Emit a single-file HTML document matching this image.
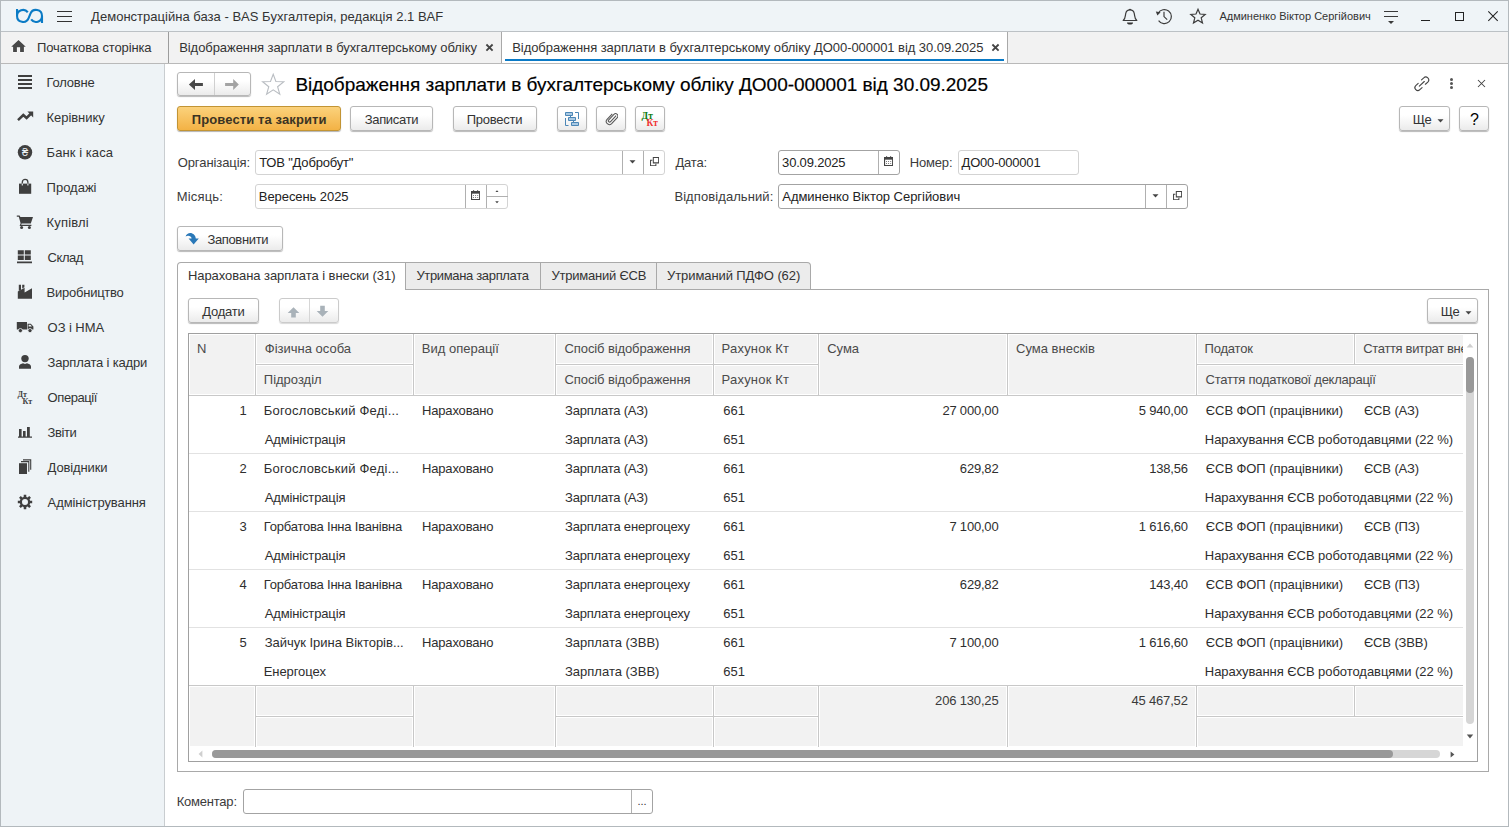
<!DOCTYPE html>
<html lang="uk"><head><meta charset="utf-8"><title>BAS Бухгалтерія</title>
<style>
*{box-sizing:border-box;margin:0;padding:0}
html,body{width:1509px;height:827px;overflow:hidden;background:#fff}
body{font-family:"Liberation Sans",sans-serif;font-size:13px;color:#333;position:relative}
.abs{position:absolute}
#frame{position:absolute;left:0;top:0;width:1509px;height:827px;border:1px solid #b3b9bd;pointer-events:none;z-index:50}
#topbar{position:absolute;left:1px;top:1px;width:1507px;height:30px;background:#eff4f7}
#topline{position:absolute;left:1px;top:31px;width:1507px;height:1px;background:#bcc1c5}
#tabbar{position:absolute;left:1px;top:32px;width:1507px;height:31px;background:#f2f2f2}
#tabline{position:absolute;left:1px;top:63px;width:1507px;height:1px;background:#b9b9b9}
#side{position:absolute;left:1px;top:64px;width:163px;height:762px;background:#eef3f6}
#sideline{position:absolute;left:164px;top:64px;width:1px;height:762px;background:#c9cdd0}
.t{position:absolute;white-space:nowrap;line-height:16px;color:#333}
.btn{position:absolute;height:25px;border:1px solid #b7b7b7;border-radius:3px;background:linear-gradient(#ffffff 35%,#ebebeb);box-shadow:0 1px 1px rgba(0,0,0,.28)}
.btn.y{border-color:#c29434;background:linear-gradient(#fbd27c,#f3b245);box-shadow:0 1px 1px rgba(0,0,0,.3)}
.fld{position:absolute;height:25px;border:1px solid #d3d3d3;border-radius:3px;background:#fff}
.fld.d{border-color:#a3a3a3}
.vs{position:absolute;top:0;width:1px;height:23px;background:#b0b0b0}
.tab{position:absolute;top:262px;height:28px;border:1px solid #a9a9a9;border-left:none;background:#ececec}
.hc{position:absolute;background:#f2f2f2;border:1px solid #fff}
</style></head><body>
<div id="topbar"></div><div id="topline"></div>
<div id="tabbar"></div><div id="tabline"></div>
<div id="side"></div><div id="sideline"></div>
<!-- TOP BAR -->
<svg class="abs" style="left:14px;top:6px" width="32" height="20" viewBox="0 0 32 20"><path d="M3.05 2.90 L3.05 9.95 A6 6 0 0 0 14.61 12.21 L16.44 7.69 A6 6 0 0 1 28.00 9.95 L28.00 17.00 M3.05 9.95 A6 6 0 0 1 13.78 6.26 M28.00 9.95 A6 6 0 0 1 17.15 13.48" fill="none" stroke="#0b7bc5" stroke-width="2.1"/></svg>
<div class="abs" style="left:57px;top:11px;width:15px;height:1px;background:#333"></div><div class="abs" style="left:57px;top:16px;width:15px;height:1px;background:#333"></div><div class="abs" style="left:57px;top:21px;width:15px;height:1px;background:#333"></div>
<div class="t" style="top:9px;left:91.10px;letter-spacing:0.02px;">Демонстраційна база - BAS Бухгалтерія, редакція 2.1 BAF</div>
<svg class="abs" style="left:1121px;top:7px" width="18" height="19" viewBox="0 0 18 19"><path d="M2.2 13.5 C4.6 11.5 4.2 8.8 4.7 6.6 C5.2 4.2 6.9 2.9 9 2.9 C11.1 2.9 12.8 4.2 13.3 6.6 C13.8 8.8 13.4 11.5 15.8 13.5 Z" fill="none" stroke="#3c3c3c" stroke-width="1.2" stroke-linejoin="round"/><path d="M8.2 2.9 a0.9 0.9 0 0 1 1.6 0" fill="none" stroke="#3c3c3c" stroke-width="1.1"/><path d="M6 15.4 H12 A3 2.1 0 0 1 6 15.4 Z" fill="#333"/></svg>
<svg class="abs" style="left:1155px;top:7px" width="19" height="19" viewBox="0 0 19 19"><path d="M3.2 6.3 A7 7 0 1 1 3.6 13.6" fill="none" stroke="#3c3c3c" stroke-width="1.2"/><path d="M0.8 4.4 L5.6 5.2 L2.4 8.6 Z" fill="#3c3c3c"/><path d="M9 4.8 V9.6 L12.2 12.6" fill="none" stroke="#3c3c3c" stroke-width="1.2"/></svg>
<svg class="abs" style="left:1189px;top:7px" width="18" height="18" viewBox="0 0 18 18"><path d="M9 2.2 L11 7 L16.2 7.4 L12.2 10.8 L13.5 16 L9 13.2 L4.5 16 L5.8 10.8 L1.8 7.4 L7 7 Z" fill="none" stroke="#3c3c3c" stroke-width="1.2" stroke-linejoin="miter"/></svg>
<div class="t" style="top:9px;left:1219.40px;font-size:11px;line-height:14px;">Админенко Віктор Сергійович</div>
<svg class="abs" style="left:1383px;top:9px" width="16" height="16" viewBox="0 0 16 16"><path d="M1 2.5H15M1 7.5H15" stroke="#3a3a3a" stroke-width="1" fill="none"/><path d="M5 12 H11 L8 15 Z" fill="#3a3a3a"/></svg>
<div class="abs" style="left:1421px;top:20px;width:9px;height:1px;background:#222"></div>
<div class="abs" style="left:1455px;top:12px;width:9px;height:9px;border:1px solid #222"></div>
<svg class="abs" style="left:1487px;top:10px" width="12" height="12" viewBox="0 0 12 12"><path d="M1.3 1.4 L10.7 10.8 M10.7 1.4 L1.3 10.8" stroke="#222" stroke-width="1.05" fill="none"/></svg>
<!-- TAB BAR -->
<svg class="abs" style="left:11px;top:40px;overflow:visible" width="15" height="13" viewBox="0 0 15 13"><path d="M7.5 0 L0.2 6.7 H2.1 V11.9 H5.9 V7.2 H9.1 V11.9 H12.9 V6.7 H14.8 Z" fill="#484848" stroke="#fbfbfb" stroke-width="1.2" paint-order="stroke"/></svg>
<div class="t" style="top:40px;left:37.10px;letter-spacing:-0.131px;">Початкова сторінка</div>
<div class="abs" style="left:168px;top:32px;width:1px;height:31px;background:#9c9c9c"></div>
<div class="t" style="top:40px;left:179.20px;letter-spacing:-0.066px;">Відображення зарплати в бухгалтерському обліку</div>
<svg class="abs" style="left:485px;top:43px" width="9" height="9" viewBox="0 0 9 9"><path d="M1.4 1.5 L7.6 7.7 M7.6 1.5 L1.4 7.7" stroke="#444" stroke-width="1.8" fill="none"/></svg>
<div class="abs" style="left:501px;top:32px;width:1px;height:31px;background:#a9a9a9"></div>
<div class="abs" style="left:502px;top:32px;width:505px;height:31px;background:#fff"></div>
<div class="abs" style="left:1007px;top:32px;width:1px;height:31px;background:#a9a9a9"></div>
<div class="abs" style="left:505px;top:59px;width:499px;height:2px;background:#0a7ac6"></div>
<div class="t" style="top:40px;left:512.20px;letter-spacing:-0.053px;">Відображення зарплати в бухгалтерському обліку ДО00-000001 від 30.09.2025</div>
<svg class="abs" style="left:991px;top:43px" width="9" height="9" viewBox="0 0 9 9"><path d="M1.4 1.5 L7.6 7.7 M7.6 1.5 L1.4 7.7" stroke="#444" stroke-width="1.8" fill="none"/></svg>
<!-- SIDEBAR -->
<div class="t" style="top:75px;left:46.60px;letter-spacing:-0.21px;">Головне</div>
<div class="t" style="top:110px;left:46.60px;letter-spacing:-0.063px;">Керівнику</div>
<div class="t" style="top:145px;left:46.60px;letter-spacing:0.066px;">Банк і каса</div>
<div class="t" style="top:180px;left:46.60px;letter-spacing:-0.005px;">Продажі</div>
<div class="t" style="top:215px;left:46.60px;letter-spacing:0.151px;">Купівлі</div>
<div class="t" style="top:250px;left:47.60px;letter-spacing:-0.45px;">Склад</div>
<div class="t" style="top:285px;left:46.60px;letter-spacing:-0.244px;">Виробництво</div>
<div class="t" style="top:320px;left:47.60px;letter-spacing:-0.07px;">ОЗ і НМА</div>
<div class="t" style="top:355px;left:47.60px;letter-spacing:-0.177px;">Зарплата і кадри</div>
<div class="t" style="top:390px;left:47.60px;letter-spacing:-0.425px;">Операції</div>
<div class="t" style="top:425px;left:47.60px;letter-spacing:-0.425px;">Звіти</div>
<div class="t" style="top:460px;left:47.60px;letter-spacing:-0.124px;">Довідники</div>
<div class="t" style="top:495px;left:47.60px;letter-spacing:-0.095px;">Адміністрування</div>
<svg class="abs" style="left:15px;top:72px" width="20" height="20" viewBox="0 0 20 20"><path d="M3 3h14v2H3zM3 7h14v2H3zM3 11h14v2H3zM3 15h14v2H3z" fill="#3f3f3f"/></svg>
<svg class="abs" style="left:15px;top:107px" width="20" height="20" viewBox="0 0 20 20"><path d="M3 13.2 L8.3 8 L11.6 11 L15.6 7" fill="none" stroke="#3f3f3f" stroke-width="2.5" stroke-linejoin="miter"/><path d="M12.4 4.6 H18.2 V10.4 Z" fill="#3f3f3f"/></svg>
<svg class="abs" style="left:15px;top:142px" width="20" height="20" viewBox="0 0 20 20"><circle cx="10" cy="10.3" r="7.2" fill="#3f3f3f"/><text x="10" y="14.2" font-size="11" text-anchor="middle" fill="#eef3f6" font-family="Liberation Sans, sans-serif">₴</text></svg>
<svg class="abs" style="left:15px;top:177px" width="20" height="20" viewBox="0 0 20 20"><path d="M4 6.6 H16.2 V16.8 H4 Z" fill="#3f3f3f"/><path d="M7.3 8.5 V5.2 A2.8 2.8 0 0 1 12.9 5.2 V8.5" fill="none" stroke="#3f3f3f" stroke-width="1.3"/><path d="M7.3 6.6 V8.6 M12.9 6.6 V8.6" stroke="#eef3f6" stroke-width="1.1"/></svg>
<svg class="abs" style="left:15px;top:212px" width="20" height="20" viewBox="0 0 20 20"><path d="M1.8 3.6 H4.6 L5.4 5 H18 L15.8 11.6 H6.6 L6.2 12.8 H16.4 V14 H4.6 L5.6 11.2 L3.8 4.8 H1.8 Z" fill="#3f3f3f"/><circle cx="6.6" cy="15.6" r="1.5" fill="#3f3f3f"/><circle cx="14.4" cy="15.6" r="1.5" fill="#3f3f3f"/></svg>
<svg class="abs" style="left:15px;top:247px" width="20" height="20" viewBox="0 0 20 20"><path d="M2.8 3.3h6v4.3h-6zM9.8 3.3h6v4.3h-6zM2.8 8.6h6v4.4h-6zM9.8 8.6h6v4.4h-6zM2 14.6h15v1.6H2z" fill="#3f3f3f"/></svg>
<svg class="abs" style="left:15px;top:282px" width="20" height="20" viewBox="0 0 20 20"><path d="M2.8 16.7 V9.6 L9.6 5.8 V10.6 L17 6.3 V16.7 Z" fill="#3f3f3f"/><path d="M3.8 2.7h2.2v5.2l-2.2 1.2zM7.2 2.7h2.2v2.6l-2.2 1.2z" fill="#3f3f3f"/></svg>
<svg class="abs" style="left:15px;top:317px" width="20" height="20" viewBox="0 0 20 20"><path d="M1.8 4.9 H12 V12.6 H1.8 Z M12.6 6.8 H15.8 L18.4 9.6 V12.6 H12.6 Z" fill="#3f3f3f"/><path d="M13.6 7.8 H15.4 L16.9 9.6 H13.6 Z" fill="#eef3f6"/><circle cx="5.4" cy="13.6" r="2.1" fill="#3f3f3f" stroke="#eef3f6" stroke-width="0.8"/><circle cx="15" cy="13.6" r="2.1" fill="#3f3f3f" stroke="#eef3f6" stroke-width="0.8"/></svg>
<svg class="abs" style="left:15px;top:352px" width="20" height="20" viewBox="0 0 20 20"><circle cx="10" cy="6.6" r="3.7" fill="#3f3f3f"/><path d="M4 16.8 V14.6 C4 12.4 6.4 11.6 8 11.2 L10 12 L12 11.2 C13.6 11.6 16 12.4 16 14.6 V16.8 Z" fill="#3f3f3f"/></svg>
<svg class="abs" style="left:15px;top:387px" width="20" height="20" viewBox="0 0 20 20"><text x="2.4" y="9.6" font-size="8" font-weight="bold" fill="#3f3f3f" font-family="Liberation Serif, serif">Дт</text><text x="7.6" y="16.8" font-size="8" font-weight="bold" fill="#3f3f3f" font-family="Liberation Serif, serif">Кт</text></svg>
<svg class="abs" style="left:15px;top:422px" width="20" height="20" viewBox="0 0 20 20"><path d="M4 7h2.6v7.6H4zM8 9h2.6v5.6H8zM12 5h2.8v9.6H12zM3 14.6h14v1.2H3z" fill="#3f3f3f"/></svg>
<svg class="abs" style="left:15px;top:457px" width="20" height="20" viewBox="0 0 20 20"><path d="M4 6.2h8v10.8H4z" fill="#3f3f3f"/><path d="M6 4.6 H13.8 V14.8 M8 2.9 H15.7 V12.8" fill="none" stroke="#3f3f3f" stroke-width="1.1"/></svg>
<svg class="abs" style="left:15px;top:492px" width="20" height="20" viewBox="0 0 20 20"><path d="M15.12 8.64 L17.19 8.76 L17.19 11.24 L15.12 11.36 L14.59 12.66 L15.96 14.21 L14.21 15.96 L12.66 14.59 L11.36 15.12 L11.24 17.19 L8.76 17.19 L8.64 15.12 L7.34 14.59 L5.79 15.96 L4.04 14.21 L5.41 12.66 L4.88 11.36 L2.81 11.24 L2.81 8.76 L4.88 8.64 L5.41 7.34 L4.04 5.79 L5.79 4.04 L7.34 5.41 L8.64 4.88 L8.76 2.81 L11.24 2.81 L11.36 4.88 L12.66 5.41 L14.21 4.04 L15.96 5.79 L14.59 7.34 Z M13 10 A3 3 0 1 0 7 10 A3 3 0 1 0 13 10 Z" fill="#3f3f3f" fill-rule="evenodd"/></svg>
<!-- MAIN -->
<div class="abs" style="left:165px;top:64px;width:1343px;height:762px;background:#fff"></div>
<div class="btn " style="left:177px;top:72px;width:74px;height:24px;"></div>
<div class="abs" style="left:214px;top:73px;width:1px;height:22px;background:#d0d0d0"></div>
<svg class="abs" style="left:188px;top:78px" width="16" height="12" viewBox="0 0 16 12"><path d="M0.9 6.5 L7 1.1 V4.9 H14.9 V8 H7 V11.9 Z" fill="#484848"/></svg>
<svg class="abs" style="left:224px;top:78px" width="16" height="12" viewBox="0 0 16 12"><path d="M14.8 6.5 L9.2 1.1 V4.9 H1.1 V8 H9.2 V11.9 Z" fill="#a3a3a3"/></svg>
<svg class="abs" style="left:261px;top:72px" width="24" height="24" viewBox="0 0 24 24"><path d="M12.2 2.3 L14.9 9.5 L22.8 9.8 L16.6 14.7 L18.8 22.3 L12.2 17.9 L5.6 22.3 L7.8 14.7 L1.6 9.8 L9.5 9.5 Z" fill="#fff" stroke="#b9bdc2" stroke-width="1.1" stroke-linejoin="miter"/></svg>
<div class="t" style="top:73px;left:295.40px;font-size:19px;line-height:24px;color:#000;letter-spacing:-0.024px;-webkit-text-stroke:0.18px #000;">Відображення зарплати в бухгалтерському обліку ДО00-000001 від 30.09.2025</div>
<svg class="abs" style="left:1412.8px;top:74.8px" width="17.6" height="17.6" viewBox="0 0 19 19"><g fill="none" stroke="#444" stroke-width="1.2" stroke-linecap="round"><path d="M9.2 5.2 L11.6 3.2 A3.1 3.1 0 0 1 16 7.6 L13.4 10"/><path d="M9.8 13.6 L7.4 15.8 A3.1 3.1 0 0 1 3 11.4 L5.6 9"/><path d="M6.8 12 L12.2 7"/></g></svg>
<svg class="abs" style="left:1449px;top:77px" width="5" height="13" viewBox="0 0 5 13"><circle cx="2.5" cy="2.4" r="1.5" fill="#555"/><circle cx="2.5" cy="6.5" r="1.5" fill="#555"/><circle cx="2.5" cy="10.6" r="1.5" fill="#555"/></svg>
<svg class="abs" style="left:1477px;top:79px" width="9" height="9" viewBox="0 0 9 9"><path d="M1 1 L8 8 M8 1 L1 8" stroke="#444" stroke-width="1.05" fill="none"/></svg>
<div class="btn y" style="left:177px;top:106px;width:164px;height:25px;"></div>
<div class="t" style="top:112px;left:191.80px;font-weight:bold;color:#3b3323;letter-spacing:0.109px;">Провести та закрити</div>
<div class="btn " style="left:350px;top:106px;width:83px;height:25px;"></div>
<div class="t" style="top:112px;left:364.70px;letter-spacing:-0.312px;">Записати</div>
<div class="btn " style="left:453px;top:106px;width:84px;height:25px;"></div>
<div class="t" style="top:112px;left:466.70px;letter-spacing:-0.235px;">Провести</div>
<div class="btn " style="left:557px;top:106px;width:30px;height:25px;"></div>
<div class="btn " style="left:596px;top:106px;width:30px;height:25px;"></div>
<div class="btn " style="left:635px;top:106px;width:30px;height:25px;"></div>
<svg class="abs" style="left:563px;top:110px" width="18" height="18" viewBox="0 0 18 18"><g fill="#a9c9e3" stroke="#4b86b6" stroke-width="1"><path d="M2.5 2.5h7v3h-7zM5.5 7.5h7v3h-7zM8.5 12.5h7v3h-7z"/></g><path d="M12 2.5H15.5V9M2.5 8V15.5H5.5M7.5 5.5V7.5M10.5 10.5V12.5" fill="none" stroke="#4b86b6" stroke-width="1"/></svg>
<svg class="abs" style="left:604.5px;top:111.5px" width="13.5" height="14.3" viewBox="0 0 16 17"><path d="M13.2 4.4 L6.4 11.6 A1.5 1.5 0 0 1 4.2 9.6 L10.6 2.9 A2.7 2.7 0 0 1 14.6 6.6 L7.6 14 A3.7 3.7 0 0 1 2.2 9 L8.6 2.2" fill="none" stroke="#555" stroke-width="1.25"/></svg>
<svg class="abs" style="left:640px;top:109px" width="20" height="19" viewBox="0 0 20 19"><text x="1.6" y="9.8" font-size="9.5" font-weight="bold" fill="#0b7a10" font-family="Liberation Serif, serif">Дт</text><text x="6.6" y="17" font-size="9.5" font-weight="bold" fill="#f03434" font-family="Liberation Serif, serif">Кт</text></svg>
<div class="btn " style="left:1399px;top:106px;width:51px;height:25px;"></div>
<div class="t" style="top:112px;left:1412.80px;letter-spacing:-0.45px;">Ще</div>
<svg class="abs" style="left:1437px;top:119px" width="7" height="4" viewBox="0 0 7 4"><path d="M0.5 0.3H6.5L3.5 3.6Z" fill="#444"/></svg>
<div class="btn " style="left:1459px;top:106px;width:30px;height:25px;"></div>
<div class="t" style="top:110px;left:1470.00px;font-size:16px;line-height:20px;color:#000;">?</div>
<div class="t" style="top:155px;left:177.70px;color:#3b3b3b;letter-spacing:-0.078px;">Організація:</div>
<div class="fld " style="left:255px;top:150px;width:410px"><div class="vs" style="left:366px"></div><div class="vs" style="left:387px"></div></div>
<div class="t" style="top:155px;left:259.20px;color:#222;letter-spacing:-0.19px;">ТОВ "Добробут"</div>
<svg class="abs" style="left:629px;top:160px" width="7" height="4" viewBox="0 0 7 4"><path d="M0.5 0.3H6.5L3.5 3.6Z" fill="#444"/></svg>
<svg class="abs" style="left:650px;top:157px" width="9.2" height="9.2" viewBox="0 0 10 10"><path d="M3.6 0.6H9.4V6.4H3.6Z" fill="none" stroke="#444" stroke-width="1.1"/><path d="M2.6 3.6H0.6V9.4H6.4V7.4" fill="none" stroke="#444" stroke-width="1.1"/></svg>
<div class="t" style="top:155px;left:675.40px;color:#3b3b3b;letter-spacing:-0.172px;">Дата:</div>
<div class="fld d" style="left:778px;top:150px;width:122px"><div class="vs" style="left:99px"></div></div>
<div class="t" style="top:155px;left:782.10px;color:#222;letter-spacing:-0.181px;">30.09.2025</div>
<svg class="abs" style="left:884px;top:156px" width="9.2" height="10.1" viewBox="0 0 10 11"><path d="M0.6 1.6H9.4V10.4H0.6Z" fill="#fff" stroke="#444" stroke-width="1.2"/><path d="M0.6 1.4H9.4V4H0.6Z" fill="#444"/><path d="M2.8 0.2V2M7.2 0.2V2" stroke="#444" stroke-width="1.2"/><path d="M2.2 5.6h1v1h-1zM4.5 5.6h1v1h-1zM6.8 5.6h1v1h-1zM2.2 7.8h1v1h-1zM4.5 7.8h1v1h-1zM6.8 7.8h1v1h-1z" fill="#444"/></svg>
<div class="t" style="top:155px;left:909.80px;color:#3b3b3b;letter-spacing:-0.183px;">Номер:</div>
<div class="fld " style="left:958px;top:150px;width:121px"></div>
<div class="t" style="top:155px;left:961.60px;color:#222;letter-spacing:-0.205px;">ДО00-000001</div>
<div class="t" style="top:189px;left:176.70px;color:#3b3b3b;letter-spacing:0.187px;">Місяць:</div>
<div class="fld " style="left:255px;top:184px;width:253px"><div class="vs" style="left:209px"></div><div class="vs" style="left:230px"></div><div class="abs" style="left:231px;top:11px;width:21px;height:1px;background:#b0b0b0"></div></div>
<div class="t" style="top:189px;left:258.80px;color:#222;letter-spacing:-0.07px;">Вересень 2025</div>
<svg class="abs" style="left:471px;top:190px" width="9.2" height="10.1" viewBox="0 0 10 11"><path d="M0.6 1.6H9.4V10.4H0.6Z" fill="#fff" stroke="#444" stroke-width="1.2"/><path d="M0.6 1.4H9.4V4H0.6Z" fill="#444"/><path d="M2.8 0.2V2M7.2 0.2V2" stroke="#444" stroke-width="1.2"/><path d="M2.2 5.6h1v1h-1zM4.5 5.6h1v1h-1zM6.8 5.6h1v1h-1zM2.2 7.8h1v1h-1zM4.5 7.8h1v1h-1zM6.8 7.8h1v1h-1z" fill="#444"/></svg>
<svg class="abs" style="left:494.6px;top:189.5px" width="4" height="2.6" viewBox="0 0 5 3"><path d="M0.2 2.8H4.8L2.5 0.2Z" fill="#444"/></svg>
<svg class="abs" style="left:494.6px;top:201px" width="4" height="2.6" viewBox="0 0 5 3"><path d="M0.2 0.2H4.8L2.5 2.8Z" fill="#444"/></svg>
<div class="t" style="top:189px;left:674.40px;color:#3b3b3b;letter-spacing:0.087px;">Відповідальний:</div>
<div class="fld d" style="left:778px;top:184px;width:410px"><div class="vs" style="left:366px"></div><div class="vs" style="left:387px"></div></div>
<div class="t" style="top:189px;left:782.30px;color:#222;letter-spacing:-0.04px;">Админенко Віктор Сергійович</div>
<svg class="abs" style="left:1152px;top:194px" width="7" height="4" viewBox="0 0 7 4"><path d="M0.5 0.3H6.5L3.5 3.6Z" fill="#444"/></svg>
<svg class="abs" style="left:1173px;top:191px" width="9.2" height="9.2" viewBox="0 0 10 10"><path d="M3.6 0.6H9.4V6.4H3.6Z" fill="none" stroke="#444" stroke-width="1.1"/><path d="M2.6 3.6H0.6V9.4H6.4V7.4" fill="none" stroke="#444" stroke-width="1.1"/></svg>
<div class="btn " style="left:177px;top:226px;width:106px;height:25px;"></div>
<div class="t" style="top:232px;left:207.40px;letter-spacing:-0.344px;">Заповнити</div>
<svg class="abs" style="left:184px;top:231px" width="16" height="15" viewBox="0 0 16 15"><path d="M1.6 5.4 C2.4 2.8 5.4 1.4 8.2 2.4 C10.4 3.2 11.6 5 11.8 7.4 H14.8 L9.6 13.4 L4.6 7.4 H7.6 C7.4 5.4 4.6 4 1.6 5.4 Z" fill="#2a78b8"/></svg>
<div class="t" style="top:794px;left:176.70px;color:#3b3b3b;letter-spacing:-0.215px;">Коментар:</div>
<div class="fld d" style="left:243px;top:789px;width:410px"><div class="vs" style="left:387px"></div></div>
<div class="t" style="top:794px;left:637.40px;font-size:11px;line-height:14px;">...</div>
<!-- PANEL -->
<div class="abs" style="left:177px;top:289px;width:1312px;height:483px;border:1px solid #a9a9a9"></div>
<div class="abs" style="left:177px;top:262px;width:229px;height:28px;border:1px solid #a9a9a9;border-bottom:none;border-radius:4px 0 0 0;background:#fff"></div><div class="abs" style="left:178px;top:289px;width:227px;height:2px;background:#fff"></div>
<div class="tab" style="left:406px;width:135px"></div><div class="tab" style="left:541px;width:116px"></div><div class="tab" style="left:657px;width:154px;border-radius:0 4px 0 0"></div>
<div class="t" style="top:268px;left:187.90px;letter-spacing:-0.052px;">Нарахована зарплата і внески (31)</div>
<div class="t" style="top:268px;left:416.40px;letter-spacing:-0.337px;">Утримана зарплата</div>
<div class="t" style="top:268px;left:551.40px;letter-spacing:-0.218px;">Утриманий ЄСВ</div>
<div class="t" style="top:268px;left:667.10px;letter-spacing:-0.091px;">Утриманий ПДФО (62)</div>
<div class="btn " style="left:188px;top:298px;width:71px;height:25px;"></div>
<div class="t" style="top:304px;left:202.30px;letter-spacing:-0.256px;">Додати</div>
<div class="btn " style="left:279px;top:298px;width:60px;height:25px;border-color:#cbcbcb;box-shadow:0 1px 1px rgba(0,0,0,.15)"></div>
<div class="abs" style="left:309px;top:299px;width:1px;height:23px;background:#d6d6d6"></div>
<svg class="abs" style="left:287px;top:305.5px" width="13" height="13" viewBox="0 0 13 13"><path d="M6.5 1.2 L12.3 7 H8.8 V11.4 H4.2 V7 H0.7 Z" fill="#a9b2b9"/></svg>
<svg class="abs" style="left:316px;top:304.5px" width="13" height="13" viewBox="0 0 13 13"><path d="M6.5 11.7 L12.3 5.9 H8.8 V0.8 H4.2 V5.9 H0.7 Z" fill="#a9b2b9"/></svg>
<div class="btn " style="left:1427px;top:298px;width:51px;height:25px;"></div>
<div class="t" style="top:304px;left:1440.80px;letter-spacing:-0.45px;">Ще</div>
<svg class="abs" style="left:1465px;top:311px" width="7" height="4" viewBox="0 0 7 4"><path d="M0.5 0.3H6.5L3.5 3.6Z" fill="#444"/></svg>
<div class="abs" style="left:188px;top:333px;width:1290px;height:429px;border:1px solid #a0a0a0;background:#fff;overflow:hidden">
<div class="abs" style="left:0;top:0;width:1274px;height:413px;overflow:hidden">
<div class="abs" style="left:0;top:0;width:1400px;height:62px;background:#c8c8c8"></div>
<div class="hc" style="left:0px;top:0px;width:66px;height:61px"></div>
<div class="t" style="top:7px;left:7.90px;color:#4a4a4a;">N</div>
<div class="hc" style="left:67px;top:0px;width:157px;height:30px"></div>
<div class="hc" style="left:67px;top:31px;width:157px;height:30px"></div>
<div class="t" style="top:7px;left:75.80px;color:#4a4a4a;">Фізична особа</div>
<div class="t" style="top:38px;left:74.80px;color:#4a4a4a;">Підрозділ</div>
<div class="hc" style="left:225px;top:0px;width:141px;height:61px"></div>
<div class="t" style="top:7px;left:232.80px;color:#4a4a4a;">Вид операції</div>
<div class="hc" style="left:367px;top:0px;width:157px;height:30px"></div>
<div class="hc" style="left:367px;top:31px;width:157px;height:30px"></div>
<div class="t" style="top:7px;left:375.60px;color:#4a4a4a;letter-spacing:-0.111px;">Спосіб відображення</div>
<div class="t" style="top:38px;left:375.60px;color:#4a4a4a;letter-spacing:-0.111px;">Спосіб відображення</div>
<div class="hc" style="left:525px;top:0px;width:104px;height:30px"></div>
<div class="hc" style="left:525px;top:31px;width:104px;height:30px"></div>
<div class="t" style="top:7px;left:532.60px;color:#4a4a4a;letter-spacing:0.194px;">Рахунок Кт</div>
<div class="t" style="top:38px;left:532.60px;color:#4a4a4a;letter-spacing:0.194px;">Рахунок Кт</div>
<div class="hc" style="left:630px;top:0px;width:188px;height:61px"></div>
<div class="t" style="top:7px;left:638.20px;color:#4a4a4a;">Сума</div>
<div class="hc" style="left:819px;top:0px;width:188px;height:61px"></div>
<div class="t" style="top:7px;left:827.10px;color:#4a4a4a;">Сума внесків</div>
<div class="hc" style="left:1008px;top:0px;width:157px;height:30px"></div>
<div class="hc" style="left:1166px;top:0px;width:157px;height:30px"></div>
<div class="hc" style="left:1008px;top:31px;width:315px;height:30px"></div>
<div class="t" style="top:7px;left:1015.60px;color:#4a4a4a;letter-spacing:-0.209px;">Податок</div>
<div class="t" style="top:7px;left:1174.30px;color:#4a4a4a;letter-spacing:-0.345px;">Стаття витрат внесків</div>
<div class="t" style="top:38px;left:1016.60px;color:#4a4a4a;letter-spacing:-0.263px;">Стаття податкової декларації</div>
<div class="abs" style="left:0;top:61px;width:1400px;height:1px;background:#c8c8c8"></div>
<div class="t" style="top:69px;left:-342.37px;width:400px;text-align:right;color:#2e2e2e;">1</div>
<div class="t" style="top:69px;left:74.70px;color:#2e2e2e;letter-spacing:0.216px;">Богословський Феді...</div>
<div class="t" style="top:98px;left:75.70px;color:#2e2e2e;letter-spacing:-0.141px;">Адміністрація</div>
<div class="t" style="top:69px;left:233.00px;color:#2e2e2e;letter-spacing:-0.17px;">Нараховано</div>
<div class="t" style="top:69px;left:376.00px;color:#2e2e2e;letter-spacing:-0.203px;">Зарплата (АЗ)</div>
<div class="t" style="top:98px;left:376.00px;color:#2e2e2e;letter-spacing:-0.203px;">Зарплата (АЗ)</div>
<div class="t" style="top:69px;left:534.20px;color:#2e2e2e;">661</div>
<div class="t" style="top:98px;left:534.20px;color:#2e2e2e;">651</div>
<div class="t" style="top:69px;left:409.43px;width:400px;text-align:right;color:#2e2e2e;letter-spacing:-0.2px;">27 000,00</div>
<div class="t" style="top:69px;left:598.73px;width:400px;text-align:right;color:#2e2e2e;letter-spacing:-0.2px;">5 940,00</div>
<div class="t" style="top:69px;left:1016.80px;color:#2e2e2e;letter-spacing:-0.075px;">ЄСВ ФОП (працівники)</div>
<div class="t" style="top:69px;left:1174.90px;color:#2e2e2e;letter-spacing:-0.13px;">ЄСВ (АЗ)</div>
<div class="t" style="top:98px;left:1015.80px;color:#2e2e2e;letter-spacing:-0.051px;">Нарахування ЄСВ роботодавцями (22 %)</div>
<div class="abs" style="left:0;top:119px;width:1400px;height:1px;background:#e2e2e2"></div>
<div class="t" style="top:127px;left:-342.37px;width:400px;text-align:right;color:#2e2e2e;">2</div>
<div class="t" style="top:127px;left:74.70px;color:#2e2e2e;letter-spacing:0.216px;">Богословський Феді...</div>
<div class="t" style="top:156px;left:75.70px;color:#2e2e2e;letter-spacing:-0.141px;">Адміністрація</div>
<div class="t" style="top:127px;left:233.00px;color:#2e2e2e;letter-spacing:-0.17px;">Нараховано</div>
<div class="t" style="top:127px;left:376.00px;color:#2e2e2e;letter-spacing:-0.203px;">Зарплата (АЗ)</div>
<div class="t" style="top:156px;left:376.00px;color:#2e2e2e;letter-spacing:-0.203px;">Зарплата (АЗ)</div>
<div class="t" style="top:127px;left:534.20px;color:#2e2e2e;">661</div>
<div class="t" style="top:156px;left:534.20px;color:#2e2e2e;">651</div>
<div class="t" style="top:127px;left:409.43px;width:400px;text-align:right;color:#2e2e2e;letter-spacing:-0.2px;">629,82</div>
<div class="t" style="top:127px;left:598.73px;width:400px;text-align:right;color:#2e2e2e;letter-spacing:-0.2px;">138,56</div>
<div class="t" style="top:127px;left:1016.80px;color:#2e2e2e;letter-spacing:-0.075px;">ЄСВ ФОП (працівники)</div>
<div class="t" style="top:127px;left:1174.90px;color:#2e2e2e;letter-spacing:-0.13px;">ЄСВ (АЗ)</div>
<div class="t" style="top:156px;left:1015.80px;color:#2e2e2e;letter-spacing:-0.051px;">Нарахування ЄСВ роботодавцями (22 %)</div>
<div class="abs" style="left:0;top:177px;width:1400px;height:1px;background:#e2e2e2"></div>
<div class="t" style="top:185px;left:-342.37px;width:400px;text-align:right;color:#2e2e2e;">3</div>
<div class="t" style="top:185px;left:74.70px;color:#2e2e2e;letter-spacing:-0.206px;">Горбатова Інна Іванівна</div>
<div class="t" style="top:214px;left:75.70px;color:#2e2e2e;letter-spacing:-0.141px;">Адміністрація</div>
<div class="t" style="top:185px;left:233.00px;color:#2e2e2e;letter-spacing:-0.17px;">Нараховано</div>
<div class="t" style="top:185px;left:376.00px;color:#2e2e2e;letter-spacing:-0.185px;">Зарплата енергоцеху</div>
<div class="t" style="top:214px;left:376.00px;color:#2e2e2e;letter-spacing:-0.185px;">Зарплата енергоцеху</div>
<div class="t" style="top:185px;left:534.20px;color:#2e2e2e;">661</div>
<div class="t" style="top:214px;left:534.20px;color:#2e2e2e;">651</div>
<div class="t" style="top:185px;left:409.43px;width:400px;text-align:right;color:#2e2e2e;letter-spacing:-0.2px;">7 100,00</div>
<div class="t" style="top:185px;left:598.73px;width:400px;text-align:right;color:#2e2e2e;letter-spacing:-0.2px;">1 616,60</div>
<div class="t" style="top:185px;left:1016.80px;color:#2e2e2e;letter-spacing:-0.075px;">ЄСВ ФОП (працівники)</div>
<div class="t" style="top:185px;left:1174.90px;color:#2e2e2e;letter-spacing:-0.13px;">ЄСВ (ПЗ)</div>
<div class="t" style="top:214px;left:1015.80px;color:#2e2e2e;letter-spacing:-0.051px;">Нарахування ЄСВ роботодавцями (22 %)</div>
<div class="abs" style="left:0;top:235px;width:1400px;height:1px;background:#e2e2e2"></div>
<div class="t" style="top:243px;left:-342.37px;width:400px;text-align:right;color:#2e2e2e;">4</div>
<div class="t" style="top:243px;left:74.70px;color:#2e2e2e;letter-spacing:-0.206px;">Горбатова Інна Іванівна</div>
<div class="t" style="top:272px;left:75.70px;color:#2e2e2e;letter-spacing:-0.141px;">Адміністрація</div>
<div class="t" style="top:243px;left:233.00px;color:#2e2e2e;letter-spacing:-0.17px;">Нараховано</div>
<div class="t" style="top:243px;left:376.00px;color:#2e2e2e;letter-spacing:-0.185px;">Зарплата енергоцеху</div>
<div class="t" style="top:272px;left:376.00px;color:#2e2e2e;letter-spacing:-0.185px;">Зарплата енергоцеху</div>
<div class="t" style="top:243px;left:534.20px;color:#2e2e2e;">661</div>
<div class="t" style="top:272px;left:534.20px;color:#2e2e2e;">651</div>
<div class="t" style="top:243px;left:409.43px;width:400px;text-align:right;color:#2e2e2e;letter-spacing:-0.2px;">629,82</div>
<div class="t" style="top:243px;left:598.73px;width:400px;text-align:right;color:#2e2e2e;letter-spacing:-0.2px;">143,40</div>
<div class="t" style="top:243px;left:1016.80px;color:#2e2e2e;letter-spacing:-0.075px;">ЄСВ ФОП (працівники)</div>
<div class="t" style="top:243px;left:1174.90px;color:#2e2e2e;letter-spacing:-0.13px;">ЄСВ (ПЗ)</div>
<div class="t" style="top:272px;left:1015.80px;color:#2e2e2e;letter-spacing:-0.051px;">Нарахування ЄСВ роботодавцями (22 %)</div>
<div class="abs" style="left:0;top:293px;width:1400px;height:1px;background:#e2e2e2"></div>
<div class="t" style="top:301px;left:-342.37px;width:400px;text-align:right;color:#2e2e2e;">5</div>
<div class="t" style="top:301px;left:75.70px;color:#2e2e2e;letter-spacing:-0.014px;">Зайчук Ірина Вікторів...</div>
<div class="t" style="top:330px;left:74.70px;color:#2e2e2e;letter-spacing:-0.068px;">Енергоцех</div>
<div class="t" style="top:301px;left:233.00px;color:#2e2e2e;letter-spacing:-0.17px;">Нараховано</div>
<div class="t" style="top:301px;left:376.00px;color:#2e2e2e;">Зарплата (ЗВВ)</div>
<div class="t" style="top:330px;left:376.00px;color:#2e2e2e;">Зарплата (ЗВВ)</div>
<div class="t" style="top:301px;left:534.20px;color:#2e2e2e;">661</div>
<div class="t" style="top:330px;left:534.20px;color:#2e2e2e;">651</div>
<div class="t" style="top:301px;left:409.43px;width:400px;text-align:right;color:#2e2e2e;letter-spacing:-0.2px;">7 100,00</div>
<div class="t" style="top:301px;left:598.73px;width:400px;text-align:right;color:#2e2e2e;letter-spacing:-0.2px;">1 616,60</div>
<div class="t" style="top:301px;left:1016.80px;color:#2e2e2e;letter-spacing:-0.075px;">ЄСВ ФОП (працівники)</div>
<div class="t" style="top:301px;left:1174.90px;color:#2e2e2e;letter-spacing:-0.13px;">ЄСВ (ЗВВ)</div>
<div class="t" style="top:330px;left:1015.80px;color:#2e2e2e;letter-spacing:-0.051px;">Нарахування ЄСВ роботодавцями (22 %)</div>
<div class="abs" style="left:0;top:351px;width:1400px;height:63px;background:#c8c8c8"></div>
<div class="hc" style="left:0px;top:352px;width:66px;height:61px"></div>
<div class="hc" style="left:67px;top:352px;width:157px;height:30px"></div>
<div class="hc" style="left:67px;top:383px;width:157px;height:30px"></div>
<div class="hc" style="left:225px;top:352px;width:141px;height:61px"></div>
<div class="hc" style="left:367px;top:352px;width:157px;height:30px"></div>
<div class="hc" style="left:367px;top:383px;width:157px;height:30px"></div>
<div class="hc" style="left:525px;top:352px;width:104px;height:30px"></div>
<div class="hc" style="left:525px;top:383px;width:104px;height:30px"></div>
<div class="hc" style="left:630px;top:352px;width:188px;height:61px"></div>
<div class="hc" style="left:819px;top:352px;width:188px;height:61px"></div>
<div class="hc" style="left:1008px;top:352px;width:157px;height:30px"></div>
<div class="hc" style="left:1166px;top:352px;width:157px;height:30px"></div>
<div class="hc" style="left:1008px;top:383px;width:315px;height:30px"></div>
<div class="t" style="top:359px;left:409.46px;width:400px;text-align:right;color:#3a3a3a;letter-spacing:-0.17px;">206 130,25</div>
<div class="t" style="top:359px;left:598.76px;width:400px;text-align:right;color:#3a3a3a;letter-spacing:-0.17px;">45 467,52</div>
</div>
<div class="abs" style="left:1274px;top:0;width:14px;height:427px;background:#fff"></div>
<div class="abs" style="left:0;top:413px;width:1288px;height:14px;background:#fff"></div>
<svg class="abs" style="left:1277px;top:9px" width="8" height="5" viewBox="0 0 8 5"><path d="M0.6 4.4H7.4L4 0.6Z" fill="#cfcfcf"/></svg>
<div class="abs" style="left:1277px;top:23px;width:8px;height:367px;border-radius:4px;background:#d6d6d6"></div>
<div class="abs" style="left:1277px;top:23px;width:8px;height:36px;border-radius:4px;background:#999"></div>
<svg class="abs" style="left:1277px;top:400px" width="8" height="5" viewBox="0 0 8 5"><path d="M0.8 0.4H7.2L4 4.4Z" fill="#555"/></svg>
<svg class="abs" style="left:9px;top:416px" width="5" height="8" viewBox="0 0 5 8"><path d="M4.4 0.6V7.4L0.6 4Z" fill="#cfcfcf"/></svg>
<div class="abs" style="left:23px;top:416px;width:1228px;height:8px;border-radius:4px;background:#d6d6d6"></div>
<div class="abs" style="left:23px;top:416px;width:1181px;height:8px;border-radius:4px;background:#999"></div>
<svg class="abs" style="left:1261px;top:417px" width="5" height="7" viewBox="0 0 5 7"><path d="M0.6 0.4V6.6L4.4 3.5Z" fill="#555"/></svg>
</div>
<div id="frame"></div>
</body></html>
